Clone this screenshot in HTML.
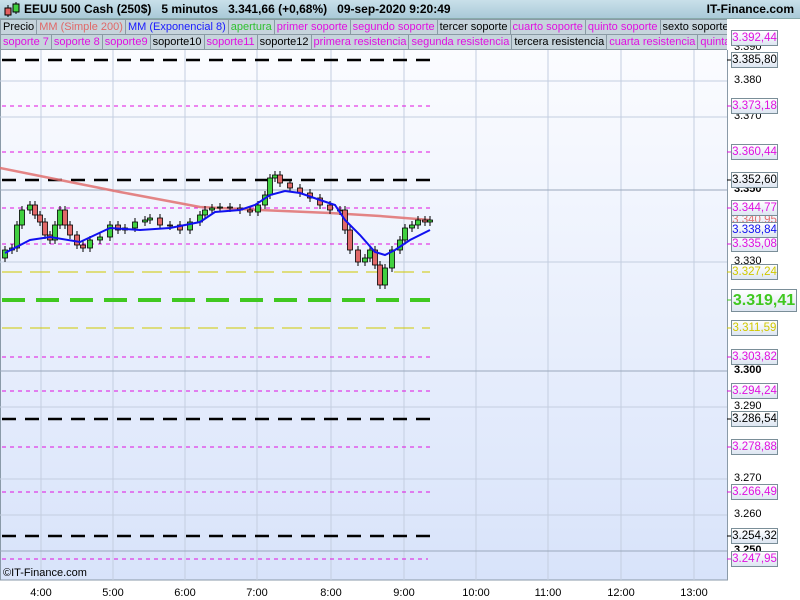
<!DOCTYPE html>
<html><head><meta charset="utf-8"><style>
*{margin:0;padding:0;box-sizing:border-box}
body{width:800px;height:600px;overflow:hidden;background:#fff;font-family:"Liberation Sans",sans-serif;position:relative}
#hdr{position:absolute;left:0;top:0;width:800px;height:19px;background:linear-gradient(#c9e0ea,#a9c9d8);border-bottom:1px solid #8aa;font-weight:bold;font-size:12px;line-height:18px;white-space:nowrap}
.row{position:absolute;left:0;height:16px;white-space:nowrap;font-size:11px;line-height:15px;overflow:hidden;width:727px}
.row span{display:inline-block;background:#c6d4dc;border:1px solid #8a9aa4;padding:0 2px;margin-right:-1px;height:16px}
.ax{position:absolute;left:734px;font-size:11px;color:#000}
.lb{position:absolute;left:731px;width:47px;height:16px;border:1px solid #7a8e98;background:linear-gradient(#fff,#dde6f2);font-size:11.5px;line-height:14px;text-align:center}
.tl{position:absolute;top:587px;font-size:11px;width:40px;text-align:center}
</style></head><body>
<div id="hdr"><svg style="position:absolute;left:3px;top:1px" width="18" height="17"><line x1="5" y1="4" x2="5" y2="16" stroke="#000"/><rect x="2" y="7" width="6" height="7" fill="#e06060" stroke="#000"/><line x1="13" y1="1" x2="13" y2="13" stroke="#000"/><rect x="10" y="3" width="6" height="8" fill="#40d040" stroke="#000"/></svg><span style="position:absolute;left:24px">EEUU 500 Cash (250$) &nbsp;&nbsp;5 minutos &nbsp;&nbsp;3.341,66 (+0,68%) &nbsp;&nbsp;09-sep-2020 9:20:49</span><span style="position:absolute;right:6px">IT-Finance.com</span></div>
<div class="row" style="top:19px"><span>Precio</span><span style="color:#e06868">MM (Simple 200)</span><span style="color:#1a1aff">MM (Exponencial 8)</span><span style="color:#30c030">apertura</span><span style="color:#e010e0">primer soporte</span><span style="color:#e010e0">segundo soporte</span><span>tercer soporte</span><span style="color:#e010e0">cuarto soporte</span><span style="color:#e010e0">quinto soporte</span><span>sexto soporte</span></div>
<div class="row" style="top:34px"><span style="color:#e010e0">soporte 7</span><span style="color:#e010e0">soporte 8</span><span style="color:#e010e0">soporte9</span><span>soporte10</span><span style="color:#e010e0">soporte11</span><span>soporte12</span><span style="color:#e010e0">primera resistencia</span><span style="color:#e010e0">segunda resistencia</span><span>tercera resistencia</span><span style="color:#e010e0">cuarta resistencia</span><span style="color:#e010e0">quinta resistencia</span></div>
<svg id="ch" style="position:absolute;left:0;top:50px" width="800" height="550"></svg>
<div id="ov"></div>
<script>
var s='';var T=50;
function Y(y){return y-T}
function pts(a){return a.map(function(p){return p[0]+','+Y(p[1])}).join(' ')}
s+='<defs><linearGradient id="g" x1="0" y1="0" x2="0" y2="1"><stop offset="0" stop-color="#fbfcff"/><stop offset="1" stop-color="#d8e3fa"/></linearGradient></defs>';
s+='<rect x="0.5" y="-1" width="727" height="531" fill="url(#g)" stroke="#8a9aa8"/>';
var vx=[41,113,185,257,331,404,476,548,621,694];
vx.forEach(function(x){s+='<line x1="'+x+'" y1="0" x2="'+x+'" y2="530" stroke="#c4cee0"/>'});
[81,117,262,407,479,515].forEach(function(y){s+='<line x1="0" y1="'+Y(y)+'" x2="727" y2="'+Y(y)+'" stroke="#c4cee0"/>'});
[190,371,551].forEach(function(y){s+='<line x1="0" y1="'+Y(y)+'" x2="727" y2="'+Y(y)+'" stroke="#9aa8bc"/>'});
var L=[[38,'#e010e0',1,'4 4','3.392,44'],[60,'#000',2.5,'14 9','3.385,80'],[106,'#e010e0',1,'4 4','3.373,18'],[152,'#e010e0',1,'4 4','3.360,44'],[180,'#000',2.5,'14 9','3.352,60'],[208,'#e010e0',1,'4 4','3.344,77'],[244,'#e010e0',1,'4 4','3.335,08'],[272,'#d0c800',1,'20 8','3.327,24'],[300,'#40c820',4,'23 11','3.319,41'],[328,'#d0c800',1,'20 8','3.311,59'],[357,'#e010e0',1,'4 4','3.303,82'],[391,'#e010e0',1,'4 4','3.294,24'],[419,'#000',2.5,'14 9','3.286,54'],[447,'#e010e0',1,'4 4','3.278,88'],[492,'#e010e0',1,'4 4','3.266,49'],[536,'#000',2.5,'14 9','3.254,32'],[559,'#e010e0',1,'4 4','3.247,95']];
L.forEach(function(l){if(l[0]>40)s+='<line x1="2" y1="'+Y(l[0])+'" x2="'+(l[0]==559?428:430)+'" y2="'+Y(l[0])+'" stroke="'+l[1]+'" stroke-width="'+l[2]+'" stroke-dasharray="'+l[3]+'"/>';s+='<line x1="727" y1="'+Y(l[0])+'" x2="731" y2="'+Y(l[0])+'" stroke="'+l[1]+'"/>'});
s+='<polyline fill="none" stroke="#e07070" stroke-width="2.5" stroke-opacity="0.85" points="'+pts([[0,168],[60,180],[120,192],[200,207],[260,210],[330,213],[380,216],[430,220]])+'"/>';
var P=[[5,250],[12,248],[17,225],[22,210],[30,205],[35,215],[40,222],[45,235],[50,240],[55,225],[60,210],[65,225],[70,235],[77,245],[83,248],[90,240],[100,237],[110,225],[118,230],[125,228],[135,222],[145,220],[150,218],[160,225],[170,225],[180,230],[190,222],[200,215],[205,210],[212,208],[220,207],[230,208],[240,210],[250,212],[258,205],[265,195],[270,178],[275,175],[280,183],[290,188],[300,193],[310,198],[320,205],[330,210],[340,210],[345,230],[350,250],[358,262],[365,258],[370,250],[375,265],[380,285],[385,268],[392,250],[400,240],[405,228],[412,225],[418,220],[425,222],[430,220]];
var pc=258;
P.forEach(function(p,i){var o=pc,c=p[1];var t=Math.min(o,c),b=Math.max(o,c);if(b-t<1){b=t+1}var up=c<o;s+='<line x1="'+p[0]+'" y1="'+Y(t-4)+'" x2="'+p[0]+'" y2="'+Y(b+4)+'" stroke="#000"/>';s+='<rect x="'+(p[0]-2.5)+'" y="'+Y(t)+'" width="5" height="'+(b-t)+'" fill="'+(up?'#40d040':'#e06868')+'" stroke="#000" stroke-width="0.8"/>';pc=c;});
s+='<polyline fill="none" stroke="#1010f0" stroke-width="2" points="'+pts([[5,253],[30,240],[50,237],[80,242],[110,228],[140,230],[170,228],[200,222],[215,212],[240,210],[255,205],[270,195],[285,191],[300,193],[320,200],[335,205],[345,220],[360,235],[375,252],[385,255],[395,250],[410,240],[430,230]])+'"/>';
document.getElementById('ch').innerHTML=s;
var h='';
[[3.390,48],[3.380,81],[3.370,117],[3.350,190,1],[3.330,262],[3.300,371,1],[3.290,407],[3.270,479],[3.260,515],[3.250,551,1]].forEach(function(a){h+='<div class="ax" style="top:'+(a[1]-7)+'px;'+(a[2]?'font-weight:bold':'')+'">'+a[0].toFixed(3)+'</div>'});
h+='<div class="lb" style="top:212px;color:#e07070">3.340,95</div>';
L.forEach(function(l){var big=l[0]==300;var col=l[1];h+='<div class="lb" style="top:'+(big?l[0]-11:l[0]-8)+'px;color:'+col+';'+(big?'height:23px;width:66px;font-size:16px;font-weight:bold;line-height:21px;':'')+'">'+l[4]+'</div>'});
h+='<div class="lb" style="top:222px;color:#1010f0">3.338,84</div>';
['4:00','5:00','6:00','7:00','8:00','9:00','10:00','11:00','12:00','13:00'].forEach(function(t,i){h+='<div class="tl" style="left:'+(vx[i]-20)+'px">'+t+'</div>'});
h+='<div style="position:absolute;left:3px;top:567px;font-size:11px">©IT-Finance.com</div>';
document.getElementById('ov').innerHTML=h;
</script>
</body></html>
